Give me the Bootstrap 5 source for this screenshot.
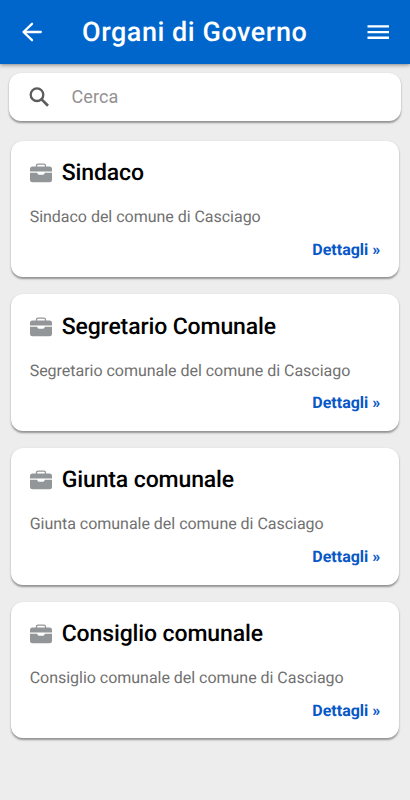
<!DOCTYPE html>
<html lang="it">
<head>
<meta charset="utf-8">
<meta name="viewport" content="width=device-width, initial-scale=1">
<title>Organi di Governo</title>
<link href="https://cdn.jsdelivr.net/npm/bootstrap@5.3.0/dist/css/bootstrap.min.css" rel="stylesheet">
<style>
body { font-family: Roboto, "Liberation Sans", sans-serif; background: #ededed; min-height: 800px; overflow: hidden; text-rendering: geometricPrecision; }
svg { display: block; flex: none; }
.app-header { height: 63.5px; padding: 0 18px; background: #0066cc; box-shadow: 0 1px 4px rgba(0,0,0,.45); }
.app-title { font-size: 27px; line-height: 32px; font-weight: 500; letter-spacing: .53px; margin-left: 36px; }
.search-box { height: 48px; margin: 9.3px 9px 0; padding: 0 16px; border-radius: 12px; box-shadow: 0 1.5px 2px rgba(0,0,0,.38); }
.search-box input::placeholder { color: #929292; opacity: 1; }
.search-box input { font-size: 18px; letter-spacing: .1px; outline: 0; margin-left: 18.5px; }
.organ-list { padding: 20px 11.4px 0; gap: 17.2px; }
.organ { height: 136.5px; border-radius: 12px; padding: 17.2px 18.3px 0; box-shadow: 0 1.5px 2px rgba(0,0,0,.38); }
.organ h2 { font-size: 23px; line-height: 30px; color: #000; margin-left: 10px; letter-spacing: -.12px; }
.organ p { font-size: 16px; line-height: 20px; margin-top: 18.9px; color: #707070; letter-spacing: -.025px; }
.organ a { font-size: 16px; line-height: 20px; margin-top: 12.9px; color: #0757c7; font-weight: 700; }
</style>
<script src="https://cdn.jsdelivr.net/npm/bootstrap@5.3.0/dist/js/bootstrap.bundle.min.js"></script>
</head>
<body>
<svg class="d-none" aria-hidden="true">
  <symbol id="case" viewBox="0 0 22 20">
    <path d="M6.500 4V2.700Q6.500 1.100 8.100 1.100h5.800q1.600 0 1.600 1.600V4" fill="none" stroke="#939699" stroke-width="1.300"/>
    <path fill="#939699" d="M2.500 3.500h17A2.500 2.500 0 0 1 22 6v2.600H0V6a2.500 2.500 0 0 1 2.500-2.500zM0 9.800h7.200q.4 1.900 1.800 1.900h4q1.400 0 1.800-1.900H22v7a2.500 2.500 0 0 1-2.500 2.500h-17A2.500 2.500 0 0 1 0 16.800z"/>
  </symbol>
</svg>
<header class="app-header d-flex align-items-center text-white">
  <svg width="28" height="28" viewBox="0 0 28 28" fill="none" stroke="#fff" stroke-width="2.300" stroke-linecap="round" stroke-linejoin="round"><path d="M14 5.800L5.500 14l8.500 8.200M5.500 14h17.300"/></svg>
  <h1 class="app-title mb-0 text-nowrap">Organi di Governo</h1>
  <svg class="ms-auto" width="28" height="28" viewBox="0 0 28 28" fill="#fff"><path d="M3.500 7.200h21.500v2.400H3.500zM3.500 12.900h21.500v2.400H3.500zM3.500 18.600h21.500v2.400H3.500z"/></svg>
</header>
<main>
  <div class="search-box d-flex align-items-center bg-white">
    <svg width="28" height="28" viewBox="0 0 28 28" fill="none" stroke="#5c5c5c"><circle cx="12" cy="11.700" r="6.300" stroke-width="2.300"/><path d="M16.600 16.400l6.400 6.300" stroke-width="2.700"/></svg>
    <input class="border-0 p-0 flex-grow-1 bg-transparent" type="text" placeholder="Cerca" aria-label="Cerca">
  </div>
  <div class="organ-list d-flex flex-column">
    <article class="organ bg-white d-flex flex-column">
      <div class="d-flex align-items-center"><svg width="22" height="20"><use href="#case"/></svg><h2 class="mb-0 fw-medium">Sindaco</h2></div>
      <p class="mb-0">Sindaco del comune di Casciago</p>
      <a class="align-self-end text-decoration-none" href="#">Dettagli »</a>
    </article>
    <article class="organ bg-white d-flex flex-column">
      <div class="d-flex align-items-center"><svg width="22" height="20"><use href="#case"/></svg><h2 class="mb-0 fw-medium">Segretario Comunale</h2></div>
      <p class="mb-0">Segretario comunale del comune di Casciago</p>
      <a class="align-self-end text-decoration-none" href="#">Dettagli »</a>
    </article>
    <article class="organ bg-white d-flex flex-column">
      <div class="d-flex align-items-center"><svg width="22" height="20"><use href="#case"/></svg><h2 class="mb-0 fw-medium">Giunta comunale</h2></div>
      <p class="mb-0">Giunta comunale del comune di Casciago</p>
      <a class="align-self-end text-decoration-none" href="#">Dettagli »</a>
    </article>
    <article class="organ bg-white d-flex flex-column">
      <div class="d-flex align-items-center"><svg width="22" height="20"><use href="#case"/></svg><h2 class="mb-0 fw-medium">Consiglio comunale</h2></div>
      <p class="mb-0">Consiglio comunale del comune di Casciago</p>
      <a class="align-self-end text-decoration-none" href="#">Dettagli »</a>
    </article>
  </div>
</main>
</body>
</html>
